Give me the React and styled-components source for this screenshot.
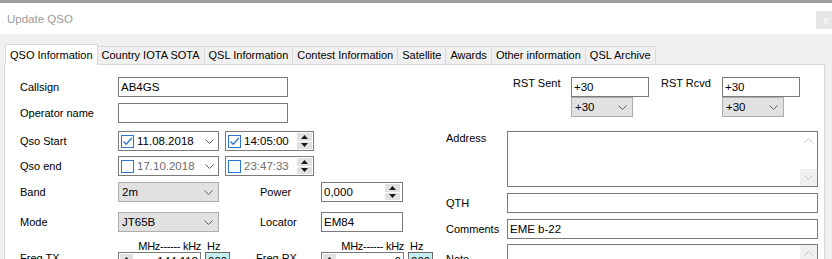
import React from "react";
import styled, { createGlobalStyle } from "styled-components";

const GlobalStyle = createGlobalStyle`
  html, body {
    margin: 0;
    padding: 0;
    overflow: hidden;
    background: #f0f0f0;
  }
  body {
    font-family: "Liberation Sans", Arial, sans-serif;
    font-size: 11px;
    line-height: 13px;
    color: #000;
  }
`;

const Window = styled.div`
  width: 832px;
  height: 259px;
  display: flex;
  flex-direction: column;
  background: #f0f0f0;
  overflow: hidden;
`;

const TopEdge = styled.div`
  height: 3px;
  flex-shrink: 0;
  background: #9e9e9e;
`;

const TitleBar = styled.div`
  height: 31px;
  flex-shrink: 0;
  background: #fff;
  display: flex;
  justify-content: space-between;
  align-items: flex-start;
`;

const Title = styled.div`
  padding: 10px 0 0 7px;
  font-size: 11.5px;
  color: #9a9a9a;
`;

const CloseButton = styled.div`
  width: 20px;
  height: 18px;
  margin: 8px -4px 0 0;
  background: #e6e6e6;
  color: #fff;
  font-size: 11px;
  display: flex;
  align-items: center;
  justify-content: center;
`;

const Body = styled.div`
  flex: 1;
  display: flex;
  flex-direction: column;
  padding: 10px 7px 0 4px;
`;

const TabStrip = styled.div`
  height: 20px;
  display: flex;
  align-items: flex-end;
  padding-left: 3px;
`;

const Tab = styled.div`
  position: relative;
  height: ${(p) => (p.$active ? "21px" : "18px")};
  margin: ${(p) => (p.$active ? "0 -1px -1px -2px" : "0 -1px 0 0")};
  padding: ${(p) => (p.$active ? "0 4px" : "0 4px")};
  border: 1px solid #d9d9d9;
  border-bottom: none;
  background: ${(p) => (p.$active ? "#fff" : "#f0f0f0")};
  z-index: ${(p) => (p.$active ? 2 : 1)};
  display: flex;
  align-items: center;
  white-space: nowrap;
  box-sizing: border-box;
`;

const Panel = styled.div`
  flex: 1;
  display: flex;
  background: #fff;
  border: 1px solid #d9d9d9;
`;

const LeftCol = styled.div`
  width: 420px;
  flex-shrink: 0;
  padding: 12px 0 0 15px;
  display: flex;
  flex-direction: column;
`;

const RightCol = styled.div`
  flex: 1;
  padding: 12px 0 0 6px;
  display: flex;
  flex-direction: column;
`;

const Row = styled.div`
  display: flex;
  align-items: ${(p) => p.$align || "center"};
  margin-top: ${(p) => p.$gap || 0}px;
`;

const Label = styled.div`
  width: ${(p) => p.$w}px;
  margin-left: ${(p) => p.$ml || 0}px;
  padding-top: ${(p) => p.$pt || 0}px;
  flex-shrink: 0;
  white-space: nowrap;
`;

const TextBox = styled.div`
  width: ${(p) => p.$w}px;
  height: 20px;
  box-sizing: border-box;
  border: 1px solid #7a7a7a;
  background: #fff;
  padding: 0 2px;
  display: flex;
  align-items: center;
  flex-shrink: 0;
`;

const Combo = styled.div`
  width: ${(p) => p.$w}px;
  height: 20px;
  box-sizing: border-box;
  border: 1px solid #adadad;
  background: #e1e1e1;
  padding: 0 5px 0 3px;
  display: flex;
  align-items: center;
  justify-content: space-between;
  flex-shrink: 0;
`;

const Picker = styled.div`
  width: ${(p) => p.$w}px;
  height: 20px;
  box-sizing: border-box;
  border: 1px solid #7a7a7a;
  background: #fff;
  padding: 0 ${(p) => p.$pr || 0}px 0 2px;
  margin-left: ${(p) => p.$ml || 0}px;
  display: flex;
  align-items: center;
  gap: 3px;
  flex-shrink: 0;
  color: ${(p) => (p.$disabled ? "#6d6d6d" : "#000")};
`;

const PickerText = styled.span`
  flex: 1;
  font-size: 11.5px;
`;

const CheckBox = styled.span`
  width: 13px;
  height: 13px;
  box-sizing: border-box;
  border: 1px solid #2d74cf;
  background: #fff;
  flex-shrink: 0;
  display: flex;
`;

const SpinWrap = styled.div`
  width: 15px;
  height: 16px;
  display: flex;
  flex-direction: column;
  flex-shrink: 0;
  gap: 1px;
`;

const SpinHalf = styled.div`
  flex: 1;
  background: #e1e1e1;
  display: flex;
  align-items: center;
  justify-content: center;
`;

const TextArea = styled.div`
  width: 311px;
  height: 56px;
  box-sizing: border-box;
  border: 1px solid #7a7a7a;
  background: #fff;
  display: flex;
  justify-content: flex-end;
  flex-shrink: 0;
`;

const ScrollCol = styled.div`
  width: 17px;
  display: flex;
  flex-direction: column;
  justify-content: space-between;
`;

const ScrollBtn = styled.div`
  height: 17px;
  display: flex;
  align-items: center;
  justify-content: center;
  background: ${(p) => (p.$shade ? "#f0f0f0" : "transparent")};
`;

const Stack = styled.div`
  display: flex;
  flex-direction: column;
`;

const FreqField = styled.div`
  display: flex;
  flex-direction: column;
`;

const FreqHead = styled.div`
  display: flex;
  height: 11px;
  line-height: 11px;
`;

const FreqUnits = styled.span`
  width: 83px;
  text-align: right;
  letter-spacing: -0.3px;
`;

const FreqHz = styled.span`
  margin-left: 6px;
`;

const FreqBoxes = styled.div`
  display: flex;
  gap: 4px;
`;

const FreqValue = styled.div`
  width: 83px;
  height: 20px;
  box-sizing: border-box;
  border: 1px solid #7a7a7a;
  display: flex;
  align-items: flex-start;
  padding: 1px 2px 0 1px;
`;

const FreqSpin = styled.div`
  width: 13px;
  height: 16px;
  background: #e1e1e1;
  display: flex;
  justify-content: center;
  padding-top: 3px;
  box-sizing: border-box;
`;

const FreqNum = styled.span`
  flex: 1;
  text-align: right;
  font-size: 11.5px;
  padding-top: 1px;
`;

const HzBox = styled.div`
  width: 25px;
  height: 20px;
  box-sizing: border-box;
  border: 1px solid #6a6a6a;
  background: #c5f0f0;
  padding: 2px 0 0 2px;
  font-size: 11.5px;
`;

const Value = styled.span`
  font-size: 11.5px;
`;

const Chevron = ({ color = "#606060" }) => (
  <svg width="9" height="5" viewBox="0 0 9 5">
    <path d="M0.5 0.5 L4.5 4.5 L8.5 0.5" fill="none" stroke={color} strokeWidth="1" />
  </svg>
);

const ChevronUp = ({ color = "#c4c4c4" }) => (
  <svg width="9" height="5" viewBox="0 0 9 5">
    <path d="M0.5 4.5 L4.5 0.5 L8.5 4.5" fill="none" stroke={color} strokeWidth="1" />
  </svg>
);

const Tri = ({ down }) => (
  <svg width="7" height="4" viewBox="0 0 7 4">
    <path d={down ? "M0 0 L7 0 L3.5 4 Z" : "M0 4 L7 4 L3.5 0 Z"} fill="#1a1a1a" />
  </svg>
);

const Check = ({ checked }) => (
  <CheckBox>
    {checked && (
      <svg width="11" height="11" viewBox="0 0 11 11">
        <path d="M1.5 5.5 L4.2 8.3 L9.8 2" fill="none" stroke="#2d74cf" strokeWidth="1.3" />
      </svg>
    )}
  </CheckBox>
);

const Spin = () => (
  <SpinWrap>
    <SpinHalf>
      <Tri />
    </SpinHalf>
    <SpinHalf>
      <Tri down />
    </SpinHalf>
  </SpinWrap>
);

const Memo = ({ shadeTop, shadeBottom }) => (
  <TextArea>
    <ScrollCol>
      <ScrollBtn $shade={shadeTop}>
        <ChevronUp />
      </ScrollBtn>
      <ScrollBtn $shade={shadeBottom}>
        <Chevron color="#c4c4c4" />
      </ScrollBtn>
    </ScrollCol>
  </TextArea>
);

const Freq = ({ value }) => (
  <FreqField>
    <FreqHead>
      <FreqUnits>MHz------ kHz</FreqUnits>
      <FreqHz>Hz</FreqHz>
    </FreqHead>
    <FreqBoxes>
      <FreqValue>
        <FreqSpin>
          <Tri />
        </FreqSpin>
        <FreqNum>{value}</FreqNum>
      </FreqValue>
      <HzBox>000</HzBox>
    </FreqBoxes>
  </FreqField>
);

const tabs = [
  "QSO Information",
  "Country IOTA SOTA",
  "QSL Information",
  "Contest Information",
  "Satellite",
  "Awards",
  "Other information",
  "QSL Archive",
];

export default function App() {
  return (
    <Window>
      <GlobalStyle />
      <TopEdge />
      <TitleBar>
        <Title>Update QSO</Title>
        <CloseButton>x</CloseButton>
      </TitleBar>
      <Body>
        <TabStrip>
          {tabs.map((t, i) => (
            <Tab key={t} $active={i === 0}>
              {t}
            </Tab>
          ))}
        </TabStrip>
        <Panel>
          <LeftCol>
            <Row>
              <Label $w={98}>Callsign</Label>
              <TextBox $w={170}>
                <Value>AB4GS</Value>
              </TextBox>
            </Row>
            <Row $gap={6}>
              <Label $w={98}>Operator name</Label>
              <TextBox $w={170} />
            </Row>
            <Row $gap={8}>
              <Label $w={98}>Qso Start</Label>
              <Picker $w={101} $pr={4}>
                <Check checked />
                <PickerText>11.08.2018</PickerText>
                <Chevron />
              </Picker>
              <Picker $w={89} $pr={1} $ml={6}>
                <Check checked />
                <PickerText>14:05:00</PickerText>
                <Spin />
              </Picker>
            </Row>
            <Row $gap={5}>
              <Label $w={98}>Qso end</Label>
              <Picker $w={101} $pr={4} $disabled>
                <Check />
                <PickerText>17.10.2018</PickerText>
                <Chevron />
              </Picker>
              <Picker $w={89} $pr={1} $ml={6} $disabled>
                <Check />
                <PickerText>23:47:33</PickerText>
                <Spin />
              </Picker>
            </Row>
            <Row $gap={6}>
              <Label $w={98}>Band</Label>
              <Combo $w={101}>
                <Value>2m</Value>
                <Chevron />
              </Combo>
              <Label $w={61} $ml={41}>
                Power
              </Label>
              <Picker $w={82} $pr={2}>
                <PickerText>0,000</PickerText>
                <Spin />
              </Picker>
            </Row>
            <Row $gap={10}>
              <Label $w={98}>Mode</Label>
              <Combo $w={101}>
                <Value>JT65B</Value>
                <Chevron />
              </Combo>
              <Label $w={61} $ml={41}>
                Locator
              </Label>
              <TextBox $w={82}>
                <Value>EM84</Value>
              </TextBox>
            </Row>
            <Row $gap={9} $align="flex-start">
              <Label $w={98} $pt={11}>
                Freq TX
              </Label>
              <Freq value="144.112" />
              <Label $w={65} $ml={26} $pt={11}>
                Freq RX
              </Label>
              <Freq value="0" />
            </Row>
          </LeftCol>
          <RightCol>
            <Row $align="flex-start">
              <Label $w={58} $ml={67}>
                RST Sent
              </Label>
              <Stack>
                <TextBox $w={78}>
                  <Value>+30</Value>
                </TextBox>
                <Combo $w={62}>
                  <Value>+30</Value>
                  <Chevron />
                </Combo>
              </Stack>
              <Label $w={61} $ml={12}>
                RST Rcvd
              </Label>
              <Stack>
                <TextBox $w={78}>
                  <Value>+30</Value>
                </TextBox>
                <Combo $w={62}>
                  <Value>+30</Value>
                  <Chevron />
                </Combo>
              </Stack>
            </Row>
            <Row $gap={14} $align="flex-start">
              <Label $w={61} $pt={1}>
                Address
              </Label>
              <Memo shadeBottom />
            </Row>
            <Row $gap={6}>
              <Label $w={61}>QTH</Label>
              <TextBox $w={311} />
            </Row>
            <Row $gap={6}>
              <Label $w={61}>Comments</Label>
              <TextBox $w={311}>
                <Value>EME b-22</Value>
              </TextBox>
            </Row>
            <Row $gap={5} $align="flex-start">
              <Label $w={61} $pt={9}>
                Note
              </Label>
              <Memo shadeTop />
            </Row>
          </RightCol>
        </Panel>
      </Body>
    </Window>
  );
}
